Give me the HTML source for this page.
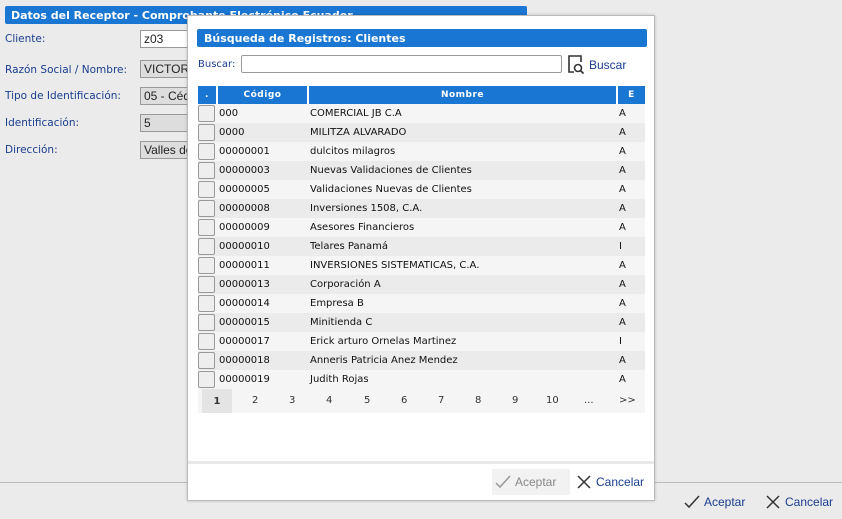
<!DOCTYPE html>
<html><head><meta charset="utf-8"><style>
*{box-sizing:border-box;margin:0;padding:0}
body{width:842px;height:519px;background:#ebebeb;font-family:"DejaVu Sans","Liberation Sans",sans-serif;font-size:11px;position:relative;overflow:hidden;color:#222}
.abs{position:absolute}
.bar{background:#1976d2;color:#fff;font-weight:bold;border-radius:2px;white-space:nowrap;overflow:hidden}
.lbl{color:#1a3d8f;position:absolute;left:5px;font-size:10.5px}
.inp{position:absolute;left:140px;width:60px;height:18px;border:1px solid #999;background:#ddd;padding:1px 3px;font-size:12px;color:#222;font-family:"Liberation Sans",sans-serif;white-space:nowrap;overflow:hidden}
table{border-collapse:collapse;position:absolute;left:198px;top:86px;width:447px;table-layout:fixed}
th{background:#1976d2;color:#fff;font-size:9px;font-weight:bold;height:18px;border-right:2px solid #fff;letter-spacing:.5px}
td{height:19px;padding:0 2px;font-size:10px;color:#111}
tr:nth-child(odd) td{background:#ebebeb}
tr:nth-child(even) td{background:#f5f5f5}
.cb{width:17px;height:17px;border:1px solid #999;border-radius:2px;background:#eee}
.btn{font-size:12px;font-family:"Liberation Sans",sans-serif;color:#1a3d8f;display:flex;align-items:center;gap:4px}
</style></head><body>
<div class="abs bar" style="left:5px;top:6px;width:522px;height:18px;padding:3px 6px;font-size:11px">Datos del Receptor - Comprobante Electrónico Ecuador</div>
<div class="lbl" style="top:33px">Cliente:</div>
<div class="inp" style="top:30px;background:#fff">z03</div>
<div class="lbl" style="top:64px">Razón Social / Nombre:</div>
<div class="inp" style="top:60px">VICTORIA</div>
<div class="lbl" style="top:90px">Tipo de Identificación:</div>
<div class="inp" style="top:87px">05 - Cédula</div>
<div class="lbl" style="top:117px">Identificación:</div>
<div class="inp" style="top:114px">5</div>
<div class="lbl" style="top:144px">Dirección:</div>
<div class="inp" style="top:141px">Valles del</div>
<div class="abs" style="left:0;top:482px;width:842px;height:1px;background:#bbb"></div>
<div class="abs btn" style="left:684px;top:494px"><svg width="16" height="16" viewBox="0 0 16 16"><path d="M1 9l4 4 10-11" fill="none" stroke="#333" stroke-width="1.5"/></svg>Aceptar</div>
<div class="abs btn" style="left:765px;top:494px"><svg width="16" height="16" viewBox="0 0 16 16"><path d="M2 2l12 12M14 2L2 14" stroke="#333" stroke-width="1.5"/></svg>Cancelar</div>

<div class="abs" style="left:187px;top:15px;width:468px;height:486px;background:#fff;border:1px solid #bbb;box-shadow:0 0 3px rgba(0,0,0,.2)">
<div class="abs bar" style="left:9px;top:13px;width:450px;height:18px;padding:3px 7px;font-size:11px">Búsqueda de Registros: Clientes</div>
<div class="abs" style="left:10px;top:43px;color:#1a3d8f;font-size:10px">Buscar:</div>
<div class="abs" style="left:53px;top:39px;width:321px;height:18px;border:1px solid #999;border-radius:2px"></div>
<svg class="abs" style="left:379px;top:39px" width="18" height="20" viewBox="0 0 18 20"><path d="M10 1H2v16h5" fill="none" stroke="#333" stroke-width="1.6"/><path d="M10 1h4v6" fill="none" stroke="#333" stroke-width="1.6"/><circle cx="11" cy="13" r="3.5" fill="none" stroke="#333" stroke-width="1.6"/><path d="M13.5 15.5l3 3" stroke="#333" stroke-width="1.8"/></svg>
<div class="abs" style="left:401px;top:42px;color:#1a3d8f;font-size:12px;font-family:'Liberation Sans',sans-serif">Buscar</div>
<div class="abs" style="left:0;top:445px;width:466px;height:3px;background:#e8e8e8"></div>
<div class="abs" style="left:304px;top:453px;width:78px;height:26px;background:#f2f2f2"></div>
<div class="abs btn" style="left:307px;top:458px;color:#888"><svg width="16" height="16" viewBox="0 0 16 16"><path d="M1 9l4 4 10-11" fill="none" stroke="#999" stroke-width="1.5"/></svg>Aceptar</div>
<div class="abs btn" style="left:388px;top:458px"><svg width="16" height="16" viewBox="0 0 16 16"><path d="M2 2l12 12M14 2L2 14" stroke="#333" stroke-width="1.5"/></svg>Cancelar</div>
</div>

<table>
<colgroup><col style="width:19px"><col style="width:91px"><col style="width:309px"><col style="width:28px"></colgroup>
<tr><th>.</th><th>Código</th><th>Nombre</th><th style="border-right:none">E</th></tr>
<tr><td style="padding:0"><div class="cb"></div></td><td>000</td><td>COMERCIAL JB C.A</td><td>A</td></tr>
<tr><td style="padding:0"><div class="cb"></div></td><td>0000</td><td>MILITZA ALVARADO</td><td>A</td></tr>
<tr><td style="padding:0"><div class="cb"></div></td><td>00000001</td><td>dulcitos milagros</td><td>A</td></tr>
<tr><td style="padding:0"><div class="cb"></div></td><td>00000003</td><td>Nuevas Validaciones de Clientes</td><td>A</td></tr>
<tr><td style="padding:0"><div class="cb"></div></td><td>00000005</td><td>Validaciones Nuevas de Clientes</td><td>A</td></tr>
<tr><td style="padding:0"><div class="cb"></div></td><td>00000008</td><td>Inversiones 1508, C.A.</td><td>A</td></tr>
<tr><td style="padding:0"><div class="cb"></div></td><td>00000009</td><td>Asesores Financieros</td><td>A</td></tr>
<tr><td style="padding:0"><div class="cb"></div></td><td>00000010</td><td>Telares Panamá</td><td>I</td></tr>
<tr><td style="padding:0"><div class="cb"></div></td><td>00000011</td><td>INVERSIONES SISTEMATICAS, C.A.</td><td>A</td></tr>
<tr><td style="padding:0"><div class="cb"></div></td><td>00000013</td><td>Corporación A</td><td>A</td></tr>
<tr><td style="padding:0"><div class="cb"></div></td><td>00000014</td><td>Empresa B</td><td>A</td></tr>
<tr><td style="padding:0"><div class="cb"></div></td><td>00000015</td><td>Minitienda C</td><td>A</td></tr>
<tr><td style="padding:0"><div class="cb"></div></td><td>00000017</td><td>Erick arturo Ornelas Martinez</td><td>I</td></tr>
<tr><td style="padding:0"><div class="cb"></div></td><td>00000018</td><td>Anneris Patricia Anez Mendez</td><td>A</td></tr>
<tr><td style="padding:0"><div class="cb"></div></td><td>00000019</td><td>Judith Rojas</td><td>A</td></tr>
</table>
<div class="abs" style="left:198px;top:389px;width:447px;height:24px;background:#f5f5f5;font-size:10px;color:#333">
<div class="abs" style="left:4px;top:0;width:30px;height:24px;background:#e4e4e4;font-weight:bold;text-align:center;line-height:26px">1</div>
<span class="abs" style="left:54px;top:6px">2</span><span class="abs" style="left:91px;top:6px">3</span><span class="abs" style="left:128px;top:6px">4</span><span class="abs" style="left:166px;top:6px">5</span><span class="abs" style="left:203px;top:6px">6</span><span class="abs" style="left:240px;top:6px">7</span><span class="abs" style="left:277px;top:6px">8</span><span class="abs" style="left:314px;top:6px">9</span><span class="abs" style="left:348px;top:6px">10</span><span class="abs" style="left:386px;top:6px">...</span><span class="abs" style="left:421px;top:6px">&gt;&gt;</span>
</div>
</body></html>
